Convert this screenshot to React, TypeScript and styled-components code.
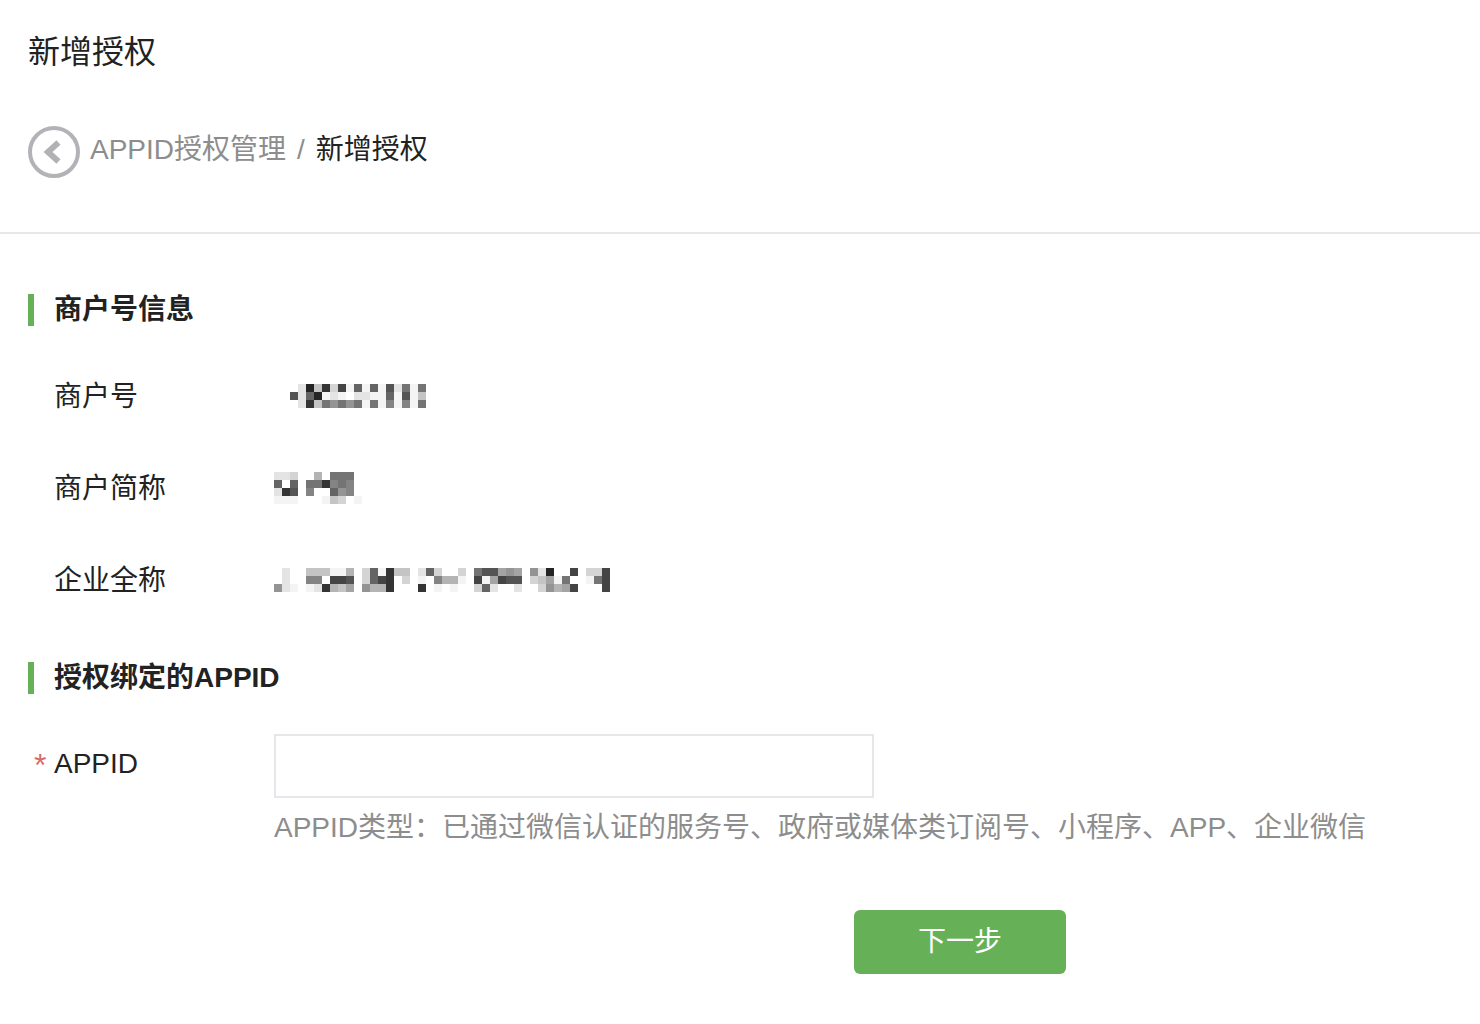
import React from "react";
import styled, { createGlobalStyle } from "styled-components";

const GlobalStyle = createGlobalStyle`
  *, *::before, *::after { box-sizing: border-box; }
  body {
    margin: 0;
    background: #fff;
    color: #222;
    font-family: "Liberation Sans", "Noto Sans CJK SC", sans-serif;
    font-size: 28px;
    line-height: 40px;
  }
`;

const Header = styled.header`
  padding: 28px 28px 52px;
  border-bottom: 2px solid #e7e7eb;
`;

const Title = styled.h1`
  margin: 0 0 48px;
  font-size: 32px;
  font-weight: 400;
  line-height: 48px;
`;

const Breadcrumb = styled.nav`
  display: flex;
  align-items: center;
  min-height: 56px;
`;

const BackButton = styled.button`
  flex: none;
  width: 52px;
  height: 52px;
  margin-right: 10px;
  padding: 0;
  border: 0;
  background: none;
  cursor: pointer;

  svg { display: block; }
`;

const Crumbs = styled.ol`
  display: flex;
  gap: 11px;
  margin: 0;
  padding: 0 0 4px;
  list-style: none;
  color: #8d8d8d;
`;

const CrumbLink = styled.a`
  color: #8d8d8d;
  text-decoration: none;
`;

const Current = styled.span`
  color: #222;
`;

const Main = styled.main`
  padding: 56px 28px 50px;
`;

const Section = styled.section`
  & + & { margin-top: 57px; }
`;

const SectionTitle = styled.h2`
  display: flex;
  align-items: center;
  gap: 20px;
  margin: 0 0 36px;
  font-size: 28px;
  font-weight: 700;
  line-height: 40px;

  &::before {
    content: "";
    width: 6px;
    height: 32px;
    background: #66b158;
  }
`;

const InfoList = styled.dl`
  display: grid;
  gap: 50px;
  margin: 0;
  padding: 9px 0 0 26px;
`;

const InfoRow = styled.div`
  display: grid;
  grid-template-columns: 220px 1fr;
  align-items: center;
  height: 42px;
`;

const InfoTerm = styled.dt`
  padding-top: 2px;
`;

const InfoValue = styled.dd<{ $indent?: number }>`
  margin: 0;
  padding-left: ${(p) => p.$indent ?? 0}px;

  svg { display: block; }
`;

const Field = styled.div`
  display: grid;
  grid-template-columns: 240px 1fr;
  padding-left: 6px;
`;

const FieldLabel = styled.label`
  display: flex;
  gap: 6px;
  height: 60px;
  align-items: center;
`;

const Required = styled.span`
  width: 14px;
  padding-top: 2px;
  color: #d9696a;
  font-size: 32px;
`;

const TextInput = styled.input`
  display: block;
  width: 100%;
  max-width: 600px;
  height: 64px;
  padding: 0 16px;
  border: 2px solid #e7e7eb;
  background: #fff;
  color: #222;
  font: inherit;
  outline: none;
`;

const Hint = styled.p`
  margin: 10px 0 0;
  color: #8d8d8d;
`;

const Actions = styled.div`
  display: flex;
  justify-content: flex-end;
  margin-top: 62px;
  padding-right: 386px;
`;

const PrimaryButton = styled.button`
  width: 212px;
  height: 64px;
  padding: 0;
  border: 0;
  border-radius: 6px;
  background: #66b158;
  color: #fff;
  font: inherit;
  cursor: pointer;
`;

/* Each character is one 8px tile: a hex grey level, or a dot for an empty tile. */
const MASKS = {
  number: [".e2c3d4f6f6f5e7f7", "5e62fef.eeff6f5fc", ".e3c79797f7f8f8f7"],
  shortName: ["eed..b.777.", "6.6.773878.", "e35.8..698.", "fff...fcd.f"],
  fullName: [
    ".e..cccffb.d6f3cc.e6d..d.755a9a.9e2..4.dd4",
    ".e..88.445.d643.d.f.8bbf.4fa455.dcaf7..f74",
    "9ef.fe3bca.9bb3...3.f.f..d6e..e..d9ba4...4",
  ],
};

function Masked({ rows, label }: { rows: string[]; label: string }) {
  const width = rows[0].length * 8;
  const height = rows.length * 8;
  return (
    <svg width={width} height={height} viewBox={`0 0 ${width} ${height}`} role="img" aria-label={label} shapeRendering="crispEdges">
      {rows.flatMap((row, y) =>
        row.split("").map((level, x) => {
          if (level === ".") return null;
          const tone = level + "4";
          return <rect key={`${x}-${y}`} x={x * 8} y={y * 8} width={8} height={8} fill={`#${tone}${tone}${tone}`} />;
        })
      )}
    </svg>
  );
}

export default function App() {
  return (
    <>
      <GlobalStyle />
      <Header>
        <Title>新增授权</Title>
        <Breadcrumb aria-label="面包屑">
          <BackButton type="button" aria-label="返回">
            <svg width="52" height="52" viewBox="0 0 52 52" fill="none">
              <circle cx="26" cy="26" r="24" stroke="#b2b3b7" strokeWidth="4" />
              <path d="M30.5 16.5 L20 26 L30.5 35.5" stroke="#b2b2b5" strokeWidth="6" />
            </svg>
          </BackButton>
          <Crumbs>
            <li><CrumbLink href="#appid">APPID授权管理</CrumbLink></li>
            <li aria-hidden="true">/</li>
            <li><Current aria-current="page">新增授权</Current></li>
          </Crumbs>
        </Breadcrumb>
      </Header>
      <Main>
        <Section>
          <SectionTitle>商户号信息</SectionTitle>
          <InfoList>
            <InfoRow>
              <InfoTerm>商户号</InfoTerm>
              <InfoValue $indent={16}><Masked rows={MASKS.number} label="商户号" /></InfoValue>
            </InfoRow>
            <InfoRow>
              <InfoTerm>商户简称</InfoTerm>
              <InfoValue><Masked rows={MASKS.shortName} label="商户简称" /></InfoValue>
            </InfoRow>
            <InfoRow>
              <InfoTerm>企业全称</InfoTerm>
              <InfoValue><Masked rows={MASKS.fullName} label="企业全称" /></InfoValue>
            </InfoRow>
          </InfoList>
        </Section>
        <Section>
          <SectionTitle>授权绑定的APPID</SectionTitle>
          <Field>
            <FieldLabel htmlFor="appid">
              <Required aria-hidden="true">*</Required>
              APPID
            </FieldLabel>
            <div>
              <TextInput id="appid" type="text" required aria-describedby="appid-hint" />
              <Hint id="appid-hint">APPID类型：已通过微信认证的服务号、政府或媒体类订阅号、小程序、APP、企业微信</Hint>
            </div>
          </Field>
        </Section>
        <Actions>
          <PrimaryButton type="button">下一步</PrimaryButton>
        </Actions>
      </Main>
    </>
  );
}
